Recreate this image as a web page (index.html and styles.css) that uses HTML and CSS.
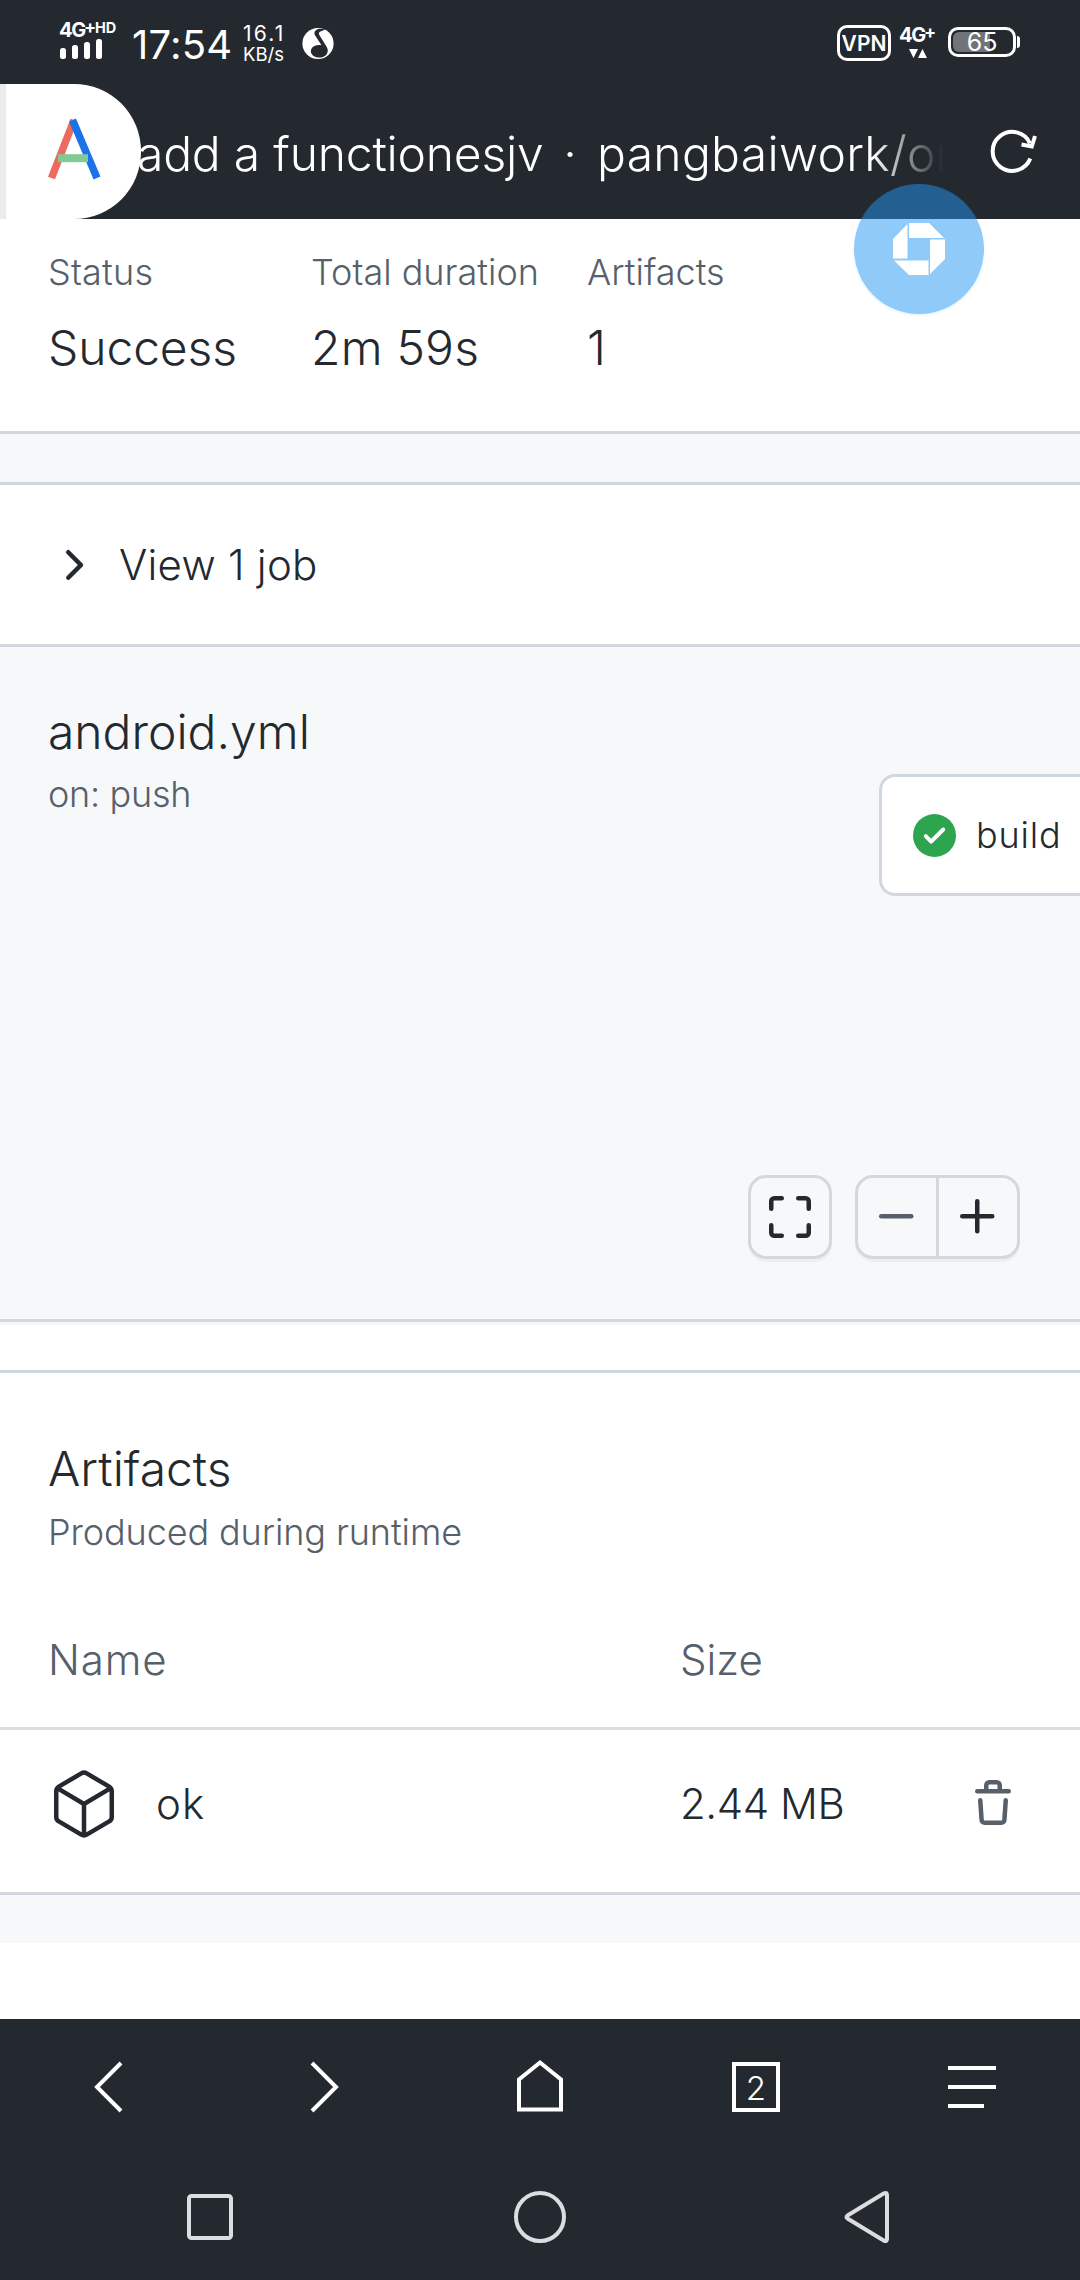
FILE: index.html
```html
<!DOCTYPE html>
<html lang="en">
<head>
<meta charset="utf-8">
<title>add a functionesjv · pangbaiwork</title>
<link rel="stylesheet" href="styles.css">
</head>
<body>
<div class="screen">
  <header class="status-bar">
    <div class="signal">
      <div class="signal-label"><span class="net">4G</span><span class="plus">+</span><span class="hd">HD</span></div>
      <div class="bars"><i class="b1"></i><i class="b2"></i><i class="b3"></i><i class="b4"></i></div>
    </div>
    <div class="clock">17:54</div>
    <div class="speed"><span class="rate">16.1</span><span class="unit">KB/s</span></div>
    <svg class="app-mark" viewBox="0 0 32 34" width="32" height="34">
      <circle cx="16" cy="17.5" r="15.6" fill="#fff"/>
      <path d="M15 3.500c3-2 5 .8 8-1.500-.5 2-2 2.600-4 3.300-2.500.8-2.500 2.300-1.500 4L25 21.500c2 4 0 8-4 9.500-5 1.800-11-.5-12-4.500-.9-4.500 3-7.500 8-7.500 1 0 2 .2 2.500.3L13.500 10c-2-3-1-5 1.500-6.500z" fill="#24292f"/>
    </svg>
    <div class="status-right">
      <div class="vpn">VPN</div>
      <div class="data">
        <div class="data-label"><span class="net">4G</span><span class="plus">+</span></div>
        <svg viewBox="0 0 18 9" width="18" height="9" fill="#fff"><path d="M0 0h9L4.500 9zM9 9h9L13.500 0z"/></svg>
      </div>
      <div class="battery"><div class="cell"><i class="charge"></i><span>65</span></div><i class="nub"></i></div>
    </div>
  </header>

  <div class="title-bar">
    <div class="site-tab">
      <svg viewBox="0 0 56 64" width="56" height="64" fill="none">
        <path d="M27 3L4.500 61" stroke="#ec6a5e" stroke-width="7.500"/>
        <path d="M25.500 3L50 61" stroke="#1a73e8" stroke-width="7.500"/>
        <path d="M11 41.200h30" stroke="#81c995" stroke-width="8"/>
      </svg>
    </div>
    <div class="page-title"><span class="t1">add a functionesjv</span><span class="dot">·</span><span class="t2">pangbaiwork/or</span></div>
    <svg class="reload" viewBox="0 0 48 48" width="48" height="48" fill="none" stroke="#fff" stroke-width="4">
      <path d="M41.300 30.500A19.500 19.500 0 1 1 41 15.500"/><path d="M32.500 16.500l10.300 2L46 8"/>
    </svg>
    <div class="float-ball">
      <svg viewBox="0 0 52 52" width="52" height="52" fill="#fff">
        <path d="M16 0h20l15 15H16z"/><path d="M52 16.500V36L37 51V16.500z"/><path d="M35.500 52H16L1 37.500h34.500z"/><path d="M0 35.500V16L14.500 1v34.500z"/>
      </svg>
    </div>
  </div>

  <main class="page">
    <section class="summary">
      <div class="fact"><span class="label sp-status">Status</span><span class="value">Success</span></div>
      <div class="fact"><span class="label">Total duration</span><span class="value sp-time">2m 59s</span></div>
      <div class="fact"><span class="label">Artifacts</span><span class="value">1</span></div>
    </section>

    <section class="jobs">
      <svg viewBox="0 0 16 16" width="48" height="48" fill="#24292f"><path d="M6.220 3.220a.75.75 0 0 1 1.060 0l4.250 4.250a.75.75 0 0 1 0 1.060l-4.250 4.250a.75.75 0 0 1-1.060-1.060L9.940 8 6.220 4.280a.75.75 0 0 1 0-1.060z"/></svg>
      <span>View 1 job</span>
    </section>

    <section class="graph">
      <div class="graph-head">
        <h2>android.yml</h2>
        <p class="trigger">on: push</p>
      </div>
      <div class="job-card">
        <svg viewBox="0 0 16 16" width="43" height="43"><path fill="#2da44e" d="M8 16A8 8 0 1 0 8 0a8 8 0 0 0 0 16z"/><path fill="#fff" d="M11.780 6.280a.75.75 0 0 0-1.060-1.060L6.750 9.190 5.280 7.720a.75.75 0 0 0-1.060 1.060l2 2a.75.75 0 0 0 1.060 0l4.500-4.500z"/></svg>
        <span>build</span>
      </div>
      <div class="controls">
        <div class="btn-group">
          <div class="btn"><svg viewBox="0 0 16 16" width="48" height="48" class="ink"><path d="M1.750 5.250V2.750a1 1 0 0 1 1-1h2.500M10.750 1.750h2.500a1 1 0 0 1 1 1v2.500M14.250 10.750v2.500a1 1 0 0 1-1 1h-2.500M5.250 14.250h-2.500a1 1 0 0 1-1-1v-2.500"/></svg></div>
        </div>
        <div class="btn-group">
          <div class="btn"><svg viewBox="0 0 16 16" width="48" height="48" class="muted"><path d="M2.750 7.750h10"/></svg></div>
          <div class="btn"><svg viewBox="0 0 16 16" width="48" height="48" class="ink"><path d="M2.750 7.750h10M7.750 2.750v10"/></svg></div>
        </div>
      </div>
    </section>

    <section class="artifacts">
      <h2>Artifacts</h2>
      <p class="sub">Produced during runtime</p>
      <div class="row head"><span class="name">Name</span><span class="size">Size</span></div>
      <div class="row item">
        <svg viewBox="0 0 24 24" width="72" height="72" class="ink"><path d="M3.600 6.200l7.500-4.400a1.750 1.750 0 0 1 1.800 0l7.500 4.400a1.750 1.750 0 0 1 .85 1.500v8.600a1.750 1.750 0 0 1-.85 1.500l-7.500 4.400a1.750 1.750 0 0 1-1.800 0l-7.500-4.400a1.750 1.750 0 0 1-.85-1.500V7.700a1.750 1.750 0 0 1 .85-1.500zM3.100 6.700L12 12l8.900-5.300M12 12v10.300"/></svg>
        <span class="name">ok</span>
        <span class="size">2.44 MB</span>
        <svg viewBox="0 0 16 16" width="48" height="48" class="muted trash"><path d="M2.750 3.750h10.500M5.750 3.500V1.750a1 1 0 0 1 1-1h2.500a1 1 0 0 1 1 1V3.500M3.750 6.750l.45 6.550a1 1 0 0 0 1 .95h5.600a1 1 0 0 0 1-.95l.45-6.550"/></svg>
      </div>
    </section>
    <div class="strip"></div>
  </main>

  <nav class="browser-bar">
    <div><svg viewBox="0 0 48 52" width="48" height="52"><path d="M37 2L13 26l24 24"/></svg></div>
    <div><svg viewBox="0 0 48 52" width="48" height="52"><path d="M12 2l24 24-24 24"/></svg></div>
    <div><svg viewBox="0 0 48 58" width="48" height="58"><path d="M3 51.500V21.500L24 4.500l21 17v30z"/></svg></div>
    <div><span class="tabs">2</span></div>
    <div><svg viewBox="0 0 48 52" width="48" height="52"><path d="M0 7h48M0 26h48M0 45h36"/></svg></div>
  </nav>
  <nav class="system-bar">
    <svg viewBox="0 0 56 56" width="56" height="56"><rect x="7" y="7" width="42" height="42" rx="2.500"/></svg>
    <svg viewBox="0 0 56 56" width="56" height="56"><circle cx="28" cy="28" r="24"/></svg>
    <svg viewBox="0 0 56 56" width="56" height="56"><path d="M5.500 26.500L42 4.300q3-1.300 3 1.700v44q0 3-3 1.700L5.500 29.500q-2-1.500 0-3z"/></svg>
  </nav>
</div>
</body>
</html>
```

FILE: styles.css
```css
* { box-sizing: border-box; }

body {
  margin: 0;
  font-family: "Inter", "Liberation Sans", sans-serif;
  font-weight: 300;
  color: #24292f;
  background: #fff;
}

h2, p { margin: 0; font-weight: 300; }
svg { display: block; flex: none; }

.screen {
  width: 1080px;
  height: 2280px;
  display: flex;
  flex-direction: column;
  overflow: hidden;
}

/* phone status bar */
.status-bar {
  height: 84px;
  flex: none;
  display: flex;
  align-items: flex-start;
  padding: 0 60px 0 59px;
  background: #24292f;
  color: #fff;
}

.signal { width: 73px; padding-top: 21px; }
.signal-label, .data-label { display: flex; height: 18px; line-height: 18px; }
.net { font-size: 20px; font-weight: 700; letter-spacing: -1.4px; width: 25px; }
.plus { font-size: 18px; font-weight: 700; line-height: 11px; width: 11px; }
.hd { font-size: 14.500px; font-weight: 700; line-height: 14px; }
.bars { display: flex; align-items: flex-end; gap: 6px; height: 20px; padding-left: 1px; }
.bars i { width: 6px; border-radius: 2.5px; background: #fff; }
.b1 { height: 11px; }
.b2 { height: 14px; }
.b3 { height: 17px; }
.b4 { height: 20px; }

.clock { width: 111px; line-height: 89px; font-size: 40px; font-weight: 400; letter-spacing: .2px; }
.speed { width: 59px; padding-top: 23px; display: flex; flex-direction: column; }
.rate { font-size: 21px; line-height: 21px; font-weight: 400; letter-spacing: 2.2px; }
.unit { font-size: 18.500px; line-height: 20px; font-weight: 400; }
.app-mark { margin-top: 26px; }

.status-right { margin-left: auto; display: flex; align-items: flex-start; }
.vpn {
  width: 54px;
  height: 36px;
  margin-top: 25px;
  border: 3px solid #fff;
  border-radius: 10px;
  font-size: 21px;
  line-height: 31px;
  font-weight: 600;
  text-align: center;
}
.data { width: 40px; margin: 26px 9px 0 8px; }
.data svg { margin: 5px 0 0 10px; }
.battery { display: flex; align-items: center; margin-top: 27px; }
.cell {
  position: relative;
  width: 68px;
  height: 30px;
  border: 3px solid #fff;
  border-radius: 10px;
  text-align: center;
}
.charge {
  position: absolute;
  left: 2px;
  top: 2px;
  width: 37px;
  height: 20px;
  border-radius: 6px 0 0 6px;
  background: #707377;
}
.cell span { position: relative; display: block; font-size: 25px; line-height: 25px; font-weight: 400; }
.nub { width: 3px; height: 12px; margin-left: 1px; border-radius: 0 3px 3px 0; background: #fff; }

/* browser title bar */
.title-bar {
  position: relative;
  height: 135px;
  flex: none;
  display: flex;
  align-items: center;
  background: #24292f;
  color: #fff;
}
.site-tab {
  width: 141px;
  height: 135px;
  flex: none;
  padding: 33px 0 0 41px;
  border-left: 6px solid #ebebeb;
  border-radius: 0 67px 67px 0;
  background: #fff;
}
.page-title {
  width: 807px;
  margin-left: -4px;
  display: flex;
  font-size: 48px;
  line-height: 70px;
  padding-top: 5px;
  white-space: nowrap;
  overflow: hidden;
  -webkit-mask-image: linear-gradient(90deg, #000 735px, transparent 807px);
  mask-image: linear-gradient(90deg, #000 735px, transparent 807px);
}
.t1 { width: 406px; letter-spacing: -.2px; flex: none; }
.dot { width: 54px; flex: none; text-align: center; font-weight: 300; }
.t2 { letter-spacing: .3px; }
.reload { margin: 0 0 0 45px; }

.float-ball {
  position: absolute;
  left: 854px;
  top: 100px;
  width: 130px;
  height: 130px;
  border-radius: 50%;
  display: flex;
  align-items: center;
  justify-content: center;
  background: rgba(33, 150, 243, .5);
  box-shadow: 0 1px 3px rgba(33, 150, 243, .15);
}

/* page */
.page { height: 1800px; flex: none; background: #fff; }

.summary {
  height: 215px;
  padding: 26px 48px 0;
  display: grid;
  grid-template-columns: 263px 276px auto;
  border-bottom: 3px solid #d0d7de;
}
.fact { display: flex; flex-direction: column; }
.label { font-size: 36px; line-height: 54px; color: #57606a; }
.value { font-size: 48px; line-height: 72px; margin-top: 13px; letter-spacing: -.1px; }
.sp-status, .value.sp-time { letter-spacing: .2px; }

.jobs {
  height: 213px;
  padding: 51px 48px 0;
  display: flex;
  align-items: center;
  gap: 23px;
  font-size: 42px;
  letter-spacing: .25px;
  background: linear-gradient(#f6f8fa 48px, #d0d7de 48px, #d0d7de 51px, #fff 51px);
  border-bottom: 3px solid #d0d7de;
}

.graph {
  height: 675px;
  display: flex;
  flex-direction: column;
  background: #f6f8fa;
  border-bottom: 3px solid #d0d7de;
  box-shadow: 0 3px 0 rgba(27, 31, 36, .04);
}
.graph-head { height: 127px; padding: 49px 48px 0; }
.graph-head h2, .artifacts h2 { font-size: 48px; line-height: 72px; }
.trigger { font-size: 36px; line-height: 52px; color: #57606a; letter-spacing: -.3px; }
.job-card {
  align-self: flex-end;
  width: 201px;
  height: 122px;
  padding-left: 31px;
  display: flex;
  align-items: center;
  gap: 20px;
  font-size: 36px;
  letter-spacing: .8px;
  white-space: nowrap;
  background: #fff;
  border: 3px solid #d0d7de;
  border-right: 0;
  border-radius: 16px 0 0 16px;
}
.controls { display: flex; justify-content: flex-end; gap: 23px; padding-right: 60px; margin-top: 279px; }
.btn-group {
  height: 84px;
  display: flex;
  border: 3px solid #d5d8da;
  border-radius: 18px;
  background: #f6f8fa;
  box-shadow: 0 3px 0 rgba(27, 31, 36, .04);
}
.btn { width: 78px; display: flex; align-items: center; justify-content: center; }
.btn + .btn { width: 81px; border-left: 3px solid #d5d8da; }

.ink, .muted { fill: none; stroke: #24292f; stroke-width: 1.5; stroke-linecap: round; stroke-linejoin: round; }
.muted { stroke: #57606a; }

.artifacts {
  margin-top: 48px;
  height: 525px;
  padding-top: 60px;
  border-top: 3px solid #d0d7de;
  border-bottom: 3px solid #d0d7de;
}
.artifacts h2 { padding-left: 48px; }
.sub { padding-left: 48px; font-size: 36px; line-height: 54px; color: #57606a; letter-spacing: -.1px; }
.row { display: flex; align-items: center; padding: 0 48px; font-size: 42px; }
.head { height: 171px; padding-top: 32px; border-bottom: 3px solid #d8dee4; color: #57606a; }
.head .name { width: 632px; letter-spacing: .9px; }
.item { height: 162px; padding-right: 63px; padding-bottom: 15px; }
.item .name { width: 525px; padding-left: 36px; letter-spacing: 1px; }
.item .size { letter-spacing: -.45px; margin-left: 35px; }
.trash { margin-left: auto; }
.strip { height: 48px; background: #f6f8fa; }

/* browser toolbar and system keys */
.browser-bar {
  height: 135px;
  flex: none;
  display: grid;
  grid-template-columns: repeat(5, 1fr);
  align-items: center;
  justify-items: center;
  background: #24292f;
}
.browser-bar svg { fill: none; stroke: #fff; stroke-width: 4; }
.tabs {
  display: block;
  width: 48px;
  height: 50px;
  border: 4px solid #fff;
  color: #fff;
  font-size: 33px;
  line-height: 44px;
  text-align: center;
}
.system-bar {
  height: 126px;
  flex: none;
  display: flex;
  align-items: center;
  justify-content: space-between;
  padding: 0 182px;
  background: #24292f;
}
.system-bar svg { fill: none; stroke: #dcdde0; stroke-width: 4; }
```
